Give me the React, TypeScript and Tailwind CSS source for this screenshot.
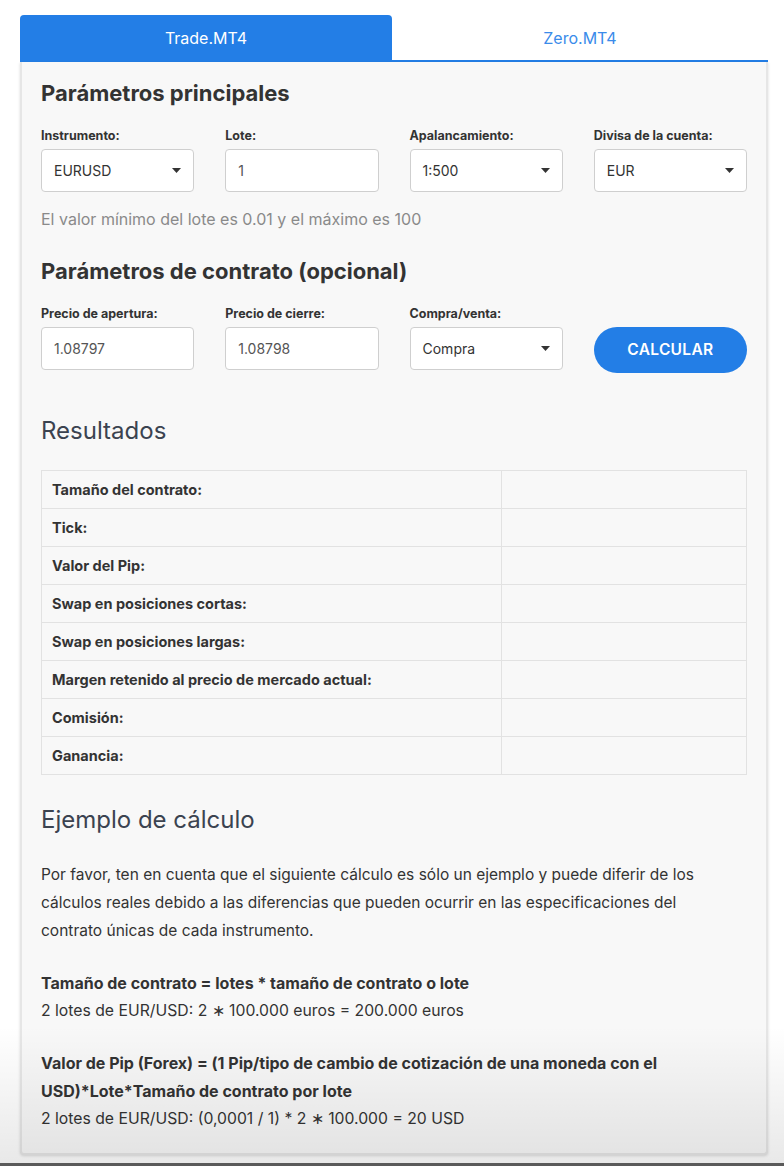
import React from "react";

const font = { fontFamily: "Inter, 'Noto Sans', sans-serif" };

function Caret() {
  return (
    <svg width="9" height="5" viewBox="0 0 9 5" className="shrink-0">
      <path d="M0 0h9L4.5 5z" fill="#333" />
    </svg>
  );
}

function Select({ value }: { value: string }) {
  return (
    <div className="flex h-[43px] items-center justify-between rounded-[4px] border border-[#cfcfcf] bg-white pl-[12px] pr-[12px] text-[14px] text-[#333]">
      <span>{value}</span>
      <Caret />
    </div>
  );
}

function Input({ value }: { value: string }) {
  return (
    <div className="flex h-[43px] items-center rounded-[4px] border border-[#cfcfcf] bg-white pl-[12px] text-[14px] text-[#555]">
      {value}
    </div>
  );
}

function Field({ label, children }: { label: string; children: React.ReactNode }) {
  return (
    <div className="flex flex-col">
      <label className="mb-[5px] text-[12.5px] font-bold leading-[16px] text-[#333]">{label}</label>
      {children}
    </div>
  );
}

const rows = [
  "Tamaño del contrato:",
  "Tick:",
  "Valor del Pip:",
  "Swap en posiciones cortas:",
  "Swap en posiciones largas:",
  "Margen retenido al precio de mercado actual:",
  "Comisión:",
  "Ganancia:",
];

export default function App() {
  return (
    <div className="relative min-h-[1166px] overflow-hidden bg-white pt-[15px]" style={font}>
      <div className="ml-[20px] w-[748px]">
        {/* tabs */}
        <div className="flex h-[47px] border-b-2 border-[#237ee6]">
          <div className="flex w-[372px] items-center justify-center rounded-t-[4px] bg-[#237ee6] text-[16px] text-white">
            Trade.MT4
          </div>
          <div className="flex flex-1 items-center justify-center text-[16px] text-[#3a8bea]">Zero.MT4</div>
        </div>

        <div className="rounded-b-[4px] border-x-2 border-b-2 border-[#e6e6e6] bg-[#f8f8f8] px-[19px] pb-[20px] pt-[17px] text-[#333] shadow-[0_1px_3px_rgba(0,0,0,0.15)]">
          <h2 className="text-[22px] font-bold leading-[28px] text-[#333]">Parámetros principales</h2>

          <div className="mt-[21px] grid grid-cols-4 gap-x-[31px]">
            <Field label="Instrumento:">
              <Select value="EURUSD" />
            </Field>
            <Field label="Lote:">
              <Input value="1" />
            </Field>
            <Field label="Apalancamiento:">
              <Select value="1:500" />
            </Field>
            <Field label="Divisa de la cuenta:">
              <Select value="EUR" />
            </Field>
          </div>

          <p className="mt-[17px] text-[16px] leading-[20px] text-[#8a8a8a]">
            El valor mínimo del lote es 0.01 y el máximo es 100
          </p>

          <h2 className="mt-[28px] text-[22px] font-bold leading-[28px] text-[#333]">
            Parámetros de contrato (opcional)
          </h2>

          <div className="mt-[21px] grid grid-cols-4 items-end gap-x-[31px]">
            <Field label="Precio de apertura:">
              <Input value="1.08797" />
            </Field>
            <Field label="Precio de cierre:">
              <Input value="1.08798" />
            </Field>
            <Field label="Compra/venta:">
              <Select value="Compra" />
            </Field>
            <button className="mb-[-3px] h-[46px] rounded-full bg-[#237ee6] text-[15.5px] font-semibold tracking-[0.3px] text-white">
              CALCULAR
            </button>
          </div>

          <h3 className="mt-[45px] text-[24px] font-normal leading-[32px] text-[#3b4350]">Resultados</h3>

          <table className="mt-[23px] w-full border-collapse">
            <tbody>
              {rows.map((r) => (
                <tr key={r} className="h-[38px]">
                  <td className="w-[460px] border border-[#e2e2e2] pl-[10px] text-[14.5px] font-bold text-[#333]">{r}</td>
                  <td className="border border-[#e2e2e2]"></td>
                </tr>
              ))}
            </tbody>
          </table>

          <h3 className="mt-[29px] text-[24px] font-normal leading-[32px] text-[#3b4350]">Ejemplo de cálculo</h3>

          <p className="mt-[25px] pr-[20px] text-[15.5px] leading-[28px] text-[#333]">
            Por favor, ten en cuenta que el siguiente cálculo es sólo un ejemplo y puede diferir de los cálculos
            reales debido a las diferencias que pueden ocurrir en las especificaciones del contrato únicas de cada
            instrumento.
          </p>

          <div className="mt-[24px] text-[15.75px] leading-[28px] text-[#333]">
            <p className="text-[16px] font-bold">Tamaño de contrato = lotes * tamaño de contrato o lote</p>
            <p>2 lotes de EUR/USD: 2 ∗ 100.000 euros = 200.000 euros</p>
          </div>

          <div className="mt-[24px] pr-[40px] text-[15.75px] leading-[28px] text-[#333]">
            <p className="text-[16px] font-bold">
              Valor de Pip (Forex) = (1 Pip/tipo de cambio de cotización de una moneda con el USD)*Lote*Tamaño de
              contrato por lote
            </p>
            <p>2 lotes de EUR/USD: (0,0001 / 1) * 2 ∗ 100.000 = 20 USD</p>
          </div>
        </div>
      </div>

      {/* bottom fade of the capture */}
      <div className="pointer-events-none absolute inset-x-0 bottom-0 h-[140px] bg-gradient-to-b from-transparent to-[rgba(0,0,0,0.09)]" />
      <div className="pointer-events-none absolute inset-x-0 bottom-0 h-[3px] bg-[#5a5a5a]" />
    </div>
  );
}
